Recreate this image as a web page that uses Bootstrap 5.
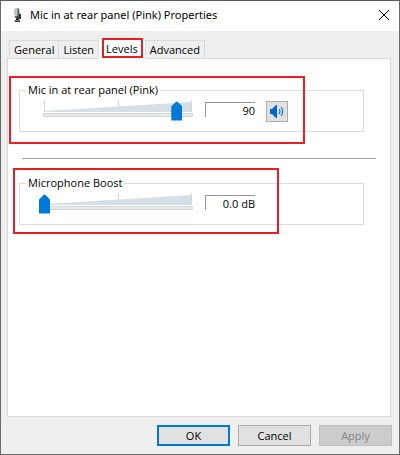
<!DOCTYPE html>
<html lang="en">
<head>
<meta charset="utf-8">
<meta name="viewport" content="width=device-width, initial-scale=1">
<title>Mic in at rear panel (Pink) Properties</title>
<link href="https://cdn.jsdelivr.net/npm/bootstrap@5.3.0/dist/css/bootstrap.min.css" rel="stylesheet">
<style>
  body { font-family: "Open Sans", "Noto Sans", sans-serif; font-size: 11px; line-height: 16px; color: #000; background: #efefef; }
  .dialog { border: 1px solid #6b6b6b; border-top-color: #5a5a5a; background: #efefef; }
  .title-bar { height: 30px; padding: 0 9px 2px 12px; }
  .title-text { font-family: "Noto Sans", "Open Sans", sans-serif; font-size: 11px; line-height: 16px; font-weight: 400; padding-left: 8px; }
  .close-button { width: 12px; height: 12px; line-height: 0; }
  .dialog-body { padding: 7px 8px 8px 6px; }
  .tab-strip { padding-left: 2px; border: 0; }
  .tab-strip .nav-link { height: 18px; padding: 0 4px; margin: 0 -1px 0 0; line-height: 17px; color: #000; background: #efefef; border: 1px solid #d9d9d9; border-bottom: 0; border-radius: 0; }
  .tab-strip .nav-link.active { height: 21px; margin-bottom: -1px; padding: 0 7px; line-height: 18px; background: #fff; color: #000; z-index: 1; }
  .sheet { background: #fff; border: 1px solid #d9d9d9; padding: 23px 14px 16px 11px; }
  .group { padding-right: 12px; }
  .group fieldset { border: 1px solid #dcdcdc; height: 50px; padding: 0 10px 0 19px; }
  .group legend { float: none; width: auto; margin: 0 0 0 -13px; padding: 0 2px; font-size: 11px; line-height: 16px; }
  .level-row { gap: 8px; margin-top: 2px; height: 22px; }
  .slider { display: grid; width: 158px; height: 22px; }
  .slider > * { grid-area: 1 / 1; }
  .slider input { -webkit-appearance: none; appearance: none; width: 158px; height: 22px; margin: 0; background: transparent; }
  .slider input::-webkit-slider-thumb { -webkit-appearance: none; width: 11px; height: 19px; border: 0; border-radius: 0; background: #0078d7; clip-path: polygon(0 5px, 5px 0, 6px 0, 11px 5px, 11px 100%, 0 100%); }
  .slider input::-moz-range-thumb { width: 11px; height: 19px; border: 0; border-radius: 0; background: #0078d7; clip-path: polygon(0 5px, 5px 0, 6px 0, 11px 5px, 11px 100%, 0 100%); }
  .reading { width: 50px; height: 15px; margin-top: 2px; padding: 0; border: 0 solid #969696; border-width: 1px 0 0 1px; border-radius: 0; text-align: right; line-height: 14px; font-size: 11px; color: #000; background: #fff; }
  .mute-button { width: 22px; height: 21px; padding: 0; margin: 1px 0 0 3px; border: 1px solid #adadad; background: #e1e1e1; line-height: 0; }
  .divider { height: 1px; margin: 26px 0 16px 3px; background: #a0a0a0; }
  .highlight { position: absolute; border: 2px solid #ed1c24; pointer-events: none; z-index: 2; }
  .highlight-tab { inset: -1px 2px 1px 3px; }
  .highlight-input { left: -10px; top: -6px; width: 296px; height: 68px; }
  .highlight-boost { left: -6px; top: -7px; width: 266px; height: 66px; }
  .actions { gap: 8px; padding-top: 8px; margin-right: -1px; }
  .action { width: 73px; height: 21px; padding: 0; border: 1px solid #adadad; border-radius: 0; background: #e1e1e1; color: #000; font-size: 11px; line-height: 19px; }
  .action-default { border: 2px solid #0078d7; line-height: 17px; }
  .action:disabled { background: #cccccc; border-color: #bfbfbf; color: #838383; opacity: 1; }
</style>
<script src="https://cdn.jsdelivr.net/npm/bootstrap@5.3.0/dist/js/bootstrap.bundle.min.js"></script>
</head>
<body>
<main class="dialog d-flex flex-column min-vh-100">
  <header class="title-bar d-flex align-items-center bg-white">
    <svg width="9" height="15" viewBox="0 0 9 15" aria-hidden="true">
      <path d="M1 1l5-1 1 8-5 1z" fill="#8b8f90"/><path d="M1 1l3 0 0 7-2 0z" fill="#c5c9ca"/>
      <path d="M5 1h1v7H5zM2 8h5v2H2z" fill="#555"/><path d="M6 6h2v5H6zM3 10h3v3H3z" fill="#303030"/>
      <path d="M1 12h6v1H1z" fill="#777"/><path d="M2 13h5v1H2z" fill="#333"/>
    </svg>
    <h1 class="title-text m-0 flex-grow-1">Mic in at rear panel (Pink) Properties</h1>
    <button type="button" class="close-button btn p-0 border-0" aria-label="Close">
      <svg width="12" height="12" viewBox="0 0 12 12"><path d="M1 1l10 10M11 1L1 11" stroke="#000" fill="none"/></svg>
    </button>
  </header>
  <div class="dialog-body d-flex flex-column flex-grow-1">
    <nav class="tab-strip nav nav-tabs align-items-end" role="tablist">
      <button type="button" class="nav-link" role="tab">General</button>
      <button type="button" class="nav-link" role="tab">Listen</button>
      <button type="button" class="nav-link active position-relative" role="tab" aria-selected="true">Levels<span class="highlight highlight-tab"></span></button>
      <button type="button" class="nav-link" role="tab">Advanced</button>
    </nav>
    <section class="sheet flex-grow-1" role="tabpanel">
      <div class="group position-relative">
        <fieldset>
          <legend>Mic in at rear panel (Pink)</legend>
          <div class="level-row d-flex">
            <div class="slider">
              <svg width="158" height="22" viewBox="0 0 158 22" aria-hidden="true">
                <path d="M5 0h1v12H5zM79 0h1v12h-1zM152 0h1v12h-1z" fill="#d6d6d6"/>
                <path d="M6 11L152 2v10H6z" fill="#d7dfe6"/>
                <path d="M4.500 13.500h149v3H4.500z" fill="#e7eaea" stroke="#d2d5d5"/>
              </svg>
              <input type="range" min="0" max="100" value="90" aria-label="Mic in at rear panel (Pink)">
            </div>
            <input class="reading" type="text" value="90" aria-label="Input level">
            <button type="button" class="mute-button" aria-label="Mute">
              <svg width="16" height="15" viewBox="0 0 16 15"><path d="M1 5h2l4-4h1v13H7l-4-4H1z" fill="#0066cc"/><path d="M10 5q2 2.500 0 5M12 3q3.500 4.500 0 9" fill="none" stroke="#0078d7" stroke-width="1.200"/></svg>
            </button>
          </div>
        </fieldset>
        <span class="highlight highlight-input"></span>
      </div>
      <div class="divider" role="separator"></div>
      <div class="group position-relative">
        <fieldset>
          <legend>Microphone Boost</legend>
          <div class="level-row d-flex">
            <div class="slider">
              <svg width="158" height="22" viewBox="0 0 158 22" aria-hidden="true">
                <path d="M5 0h1v12H5zM79 0h1v12h-1zM152 0h1v12h-1z" fill="#d6d6d6"/>
                <path d="M6 11L152 2v10H6z" fill="#d7dfe6"/>
                <path d="M4.500 13.500h149v3H4.500z" fill="#e7eaea" stroke="#d2d5d5"/>
              </svg>
              <input type="range" min="0" max="30" value="0" aria-label="Microphone Boost">
            </div>
            <input class="reading" type="text" value="0.0 dB" aria-label="Boost level">
          </div>
        </fieldset>
        <span class="highlight highlight-boost"></span>
      </div>
    </section>
    <footer class="actions d-flex justify-content-end">
      <button type="button" class="action action-default">OK</button>
      <button type="button" class="action">Cancel</button>
      <button type="button" class="action" disabled>Apply</button>
    </footer>
  </div>
</main>
</body>
</html>
